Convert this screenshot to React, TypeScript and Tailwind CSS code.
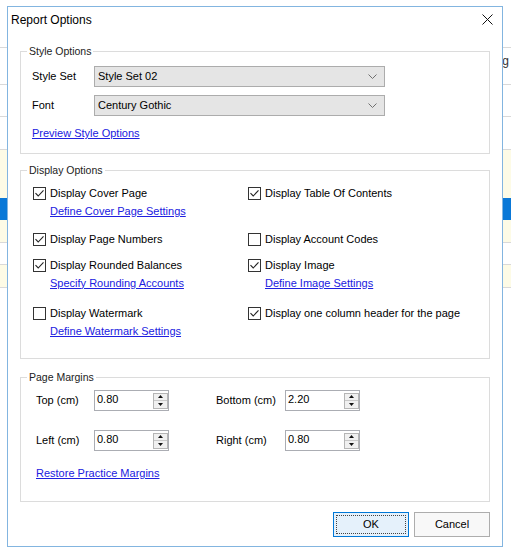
import React from 'react';

function Check({ checked }: { checked: boolean }) {
  return (
    <span className="w-[13px] h-[13px] border border-[#333333] bg-white flex items-center justify-center shrink-0">
      {checked && (
        <svg width="11" height="11" viewBox="0 0 11 11">
          <path d="M1.5 5.2 L4.2 8 L9.5 2.3" fill="none" stroke="#222222" strokeWidth="1.1" />
        </svg>
      )}
    </span>
  );
}

function Option({ label, checked, link }: { label: string; checked: boolean; link?: string }) {
  return (
    <div className="flex flex-col">
      <div className="h-[18px] flex items-center gap-[4px]">
        <Check checked={checked} />
        <span>{label}</span>
      </div>
      {link && (
        <div className="h-[18px] flex items-center pl-[17px]">
          <a className="text-[#2020e0] underline">{link}</a>
        </div>
      )}
    </div>
  );
}

function Select({ value }: { value: string }) {
  return (
    <div className="w-[291px] h-[21px] bg-[#e5e5e5] border border-[#acacac] flex items-center justify-between pl-[3px] pr-[7px]">
      <span>{value}</span>
      <svg width="9" height="5" viewBox="0 0 9 5">
        <path d="M0.5 0.5 L4.5 4.5 L8.5 0.5" fill="none" stroke="#707070" strokeWidth="1" />
      </svg>
    </div>
  );
}

function Spin({ value }: { value: string }) {
  return (
    <div className="w-[75px] h-[21px] border border-[#abadb3] bg-white flex items-center justify-between pl-[2px] pr-0">
      <span className="-mt-[2px]">{value}</span>
      <div className="w-[15px] h-[16px] border border-[#b5b5b5] bg-[#f0f0f0] flex flex-col">
        <div className="flex-1 flex items-center justify-center border-b border-[#c8c8c8]">
          <svg width="5" height="3" viewBox="0 0 5 3">
            <path d="M0 3 L2.5 0 L5 3 Z" fill="#111" />
          </svg>
        </div>
        <div className="flex-1 flex items-center justify-center">
          <svg width="5" height="3" viewBox="0 0 5 3">
            <path d="M0 0 L2.5 3 L5 0 Z" fill="#111" />
          </svg>
        </div>
      </div>
    </div>
  );
}

function Group({ title, className, children }: { title: string; className: string; children: React.ReactNode }) {
  return (
    <fieldset className={`border border-[#dcdcdc] mx-[12px] ${className}`}>
      <legend className="ml-[6px] px-[2px] text-[10.5px] leading-[13px] text-[#222]">{title}</legend>
      {children}
    </fieldset>
  );
}

export default function App() {
  return (
    <div className="relative w-[511px] h-[552px] bg-white overflow-hidden font-['Liberation_Sans',Arial,sans-serif] text-[11px] text-black">
      {/* window behind the dialog */}
      <div className="flex flex-col">
        <div className="h-[48px] border-b border-[#d9d9d9]" />
        <div className="h-[37px] border-b border-[#d9d9d9] flex justify-end items-start pt-[4px] pr-[2px] text-[12px] text-[#333]">g</div>
        <div className="h-[32px] border-b border-[#d9d9d9]" />
        <div className="h-[33px] border-b border-[#d9d9d9]" />
        <div className="h-[30px] bg-[#fdfbe6]" />
        <div className="h-[18px] bg-[#fdfbe6]" />
        <div className="h-[22px] bg-[#0a78d7]" />
        <div className="h-[23px] bg-[#fdfbe6] border-b border-[#d9d9d9]" />
        <div className="h-[22px] border-b border-[#d9d9d9]" />
        <div className="h-[23px] bg-[#fdfbe6] border-b border-[#d9d9d9]" />
      </div>

      {/* dialog */}
      <div className="absolute left-[7px] top-[6px] w-[496px] h-[541px] bg-white border border-[#83b5e0] flex flex-col">
        <div className="h-[25px] flex items-center justify-between pl-[3px] pr-[9px]">
          <span className="text-[12px] leading-[14px]">Report Options</span>
          <svg width="11" height="11" viewBox="0 0 11 11">
            <path d="M0.5 0.5 L10.5 10.5 M10.5 0.5 L0.5 10.5" stroke="#111" strokeWidth="1" />
          </svg>
        </div>

        <Group title="Style Options" className="mt-[13px]">
          <div className="pl-[11px] pt-[8px] pb-[13px]">
            <div className="flex flex-col gap-[8px]">
              <div className="flex items-center">
                <span className="w-[62px]">Style Set</span>
                <Select value="Style Set 02" />
              </div>
              <div className="flex items-center">
                <span className="w-[62px]">Font</span>
                <Select value="Century Gothic" />
              </div>
            </div>
            <div className="mt-[11px] leading-[13px]">
              <a className="text-[#2020e0] underline">Preview Style Options</a>
            </div>
          </div>
        </Group>

        <Group title="Display Options" className="mt-[10px]">
          <div className="pl-[12px] pt-[7px] pb-[18px] grid grid-cols-[215px_1fr] grid-rows-[46px_26px_48px_36px]">
            <Option label="Display Cover Page" checked link="Define Cover Page Settings" />
            <Option label="Display Table Of Contents" checked />
            <Option label="Display Page Numbers" checked />
            <Option label="Display Account Codes" checked={false} />
            <Option label="Display Rounded Balances" checked link="Specify Rounding Accounts" />
            <Option label="Display Image" checked link="Define Image Settings" />
            <Option label="Display Watermark" checked={false} link="Define Watermark Settings" />
            <Option label="Display one column header for the page" checked />
          </div>
        </Group>

        <Group title="Page Margins" className="mt-[12px]">
          <div className="pl-[15px] pt-[6px] pb-[21px]">
            <div className="flex flex-col gap-[19px]">
              <div className="flex items-center">
                <span className="w-[58px]">Top (cm)</span>
                <Spin value="0.80" />
                <span className="w-[69px] ml-[47px]">Bottom (cm)</span>
                <Spin value="2.20" />
              </div>
              <div className="flex items-center">
                <span className="w-[58px]">Left (cm)</span>
                <Spin value="0.80" />
                <span className="w-[69px] ml-[47px]">Right (cm)</span>
                <Spin value="0.80" />
              </div>
            </div>
            <div className="mt-[16px] leading-[13px]">
              <a className="text-[#2020e0] underline">Restore Practice Margins</a>
            </div>
          </div>
        </Group>

        <div className="mt-[10px] mx-[12px] flex justify-end gap-[5px]">
          <button className="w-[76px] h-[25px] border border-[#0078d7] bg-[#e5f1fb] p-[2px]">
            <span className="w-full h-full border border-dotted border-[#444] flex items-center justify-center">OK</span>
          </button>
          <button className="w-[76px] h-[25px] border border-[#adadad] bg-[#f8f8f8] flex items-center justify-center">
            Cancel
          </button>
        </div>
      </div>
    </div>
  );
}
